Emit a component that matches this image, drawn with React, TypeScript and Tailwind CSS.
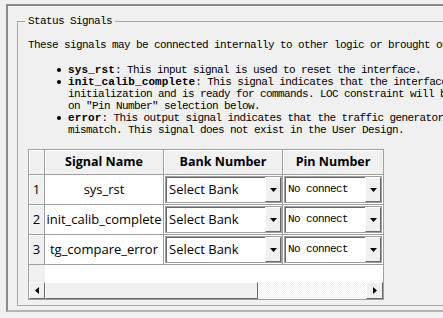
import React from 'react';

const mono = { fontFamily: '"Liberation Mono", "DejaVu Sans Mono", monospace' };
const sans = { fontFamily: '"Open Sans", "Noto Sans", sans-serif' };

const rows = ['sys_rst', 'init_calib_complete', 'tg_compare_error'];

function DownArrow() {
  return (
    <svg width="7" height="4" viewBox="0 0 7 4">
      <polygon points="0,0 7,0 3.5,4" fill="#000" />
    </svg>
  );
}

function Combo({ label, width, isMono }: { label: string; width: string; isMono?: boolean }) {
  return (
    <div className={`${width} h-[27px] flex border border-[#a0a0a0] bg-white shadow-[inset_1px_1px_0_#696969]`}>
      <div
        className={`flex-1 flex items-center pl-[3px] text-black whitespace-nowrap overflow-hidden ${isMono ? 'text-[11px] tracking-[-0.6px]' : 'text-[13px]'}`}
        style={isMono ? mono : sans}
      >
        {label}
      </div>
      <div className="w-[16px] h-[25px] bg-[#f0f0f0] border border-t-white border-l-white border-b-[#696969] border-r-[#696969] flex items-center justify-center">
        <DownArrow />
      </div>
    </div>
  );
}

function Bullet() {
  return (
    <span className="w-[11px] shrink-0 pt-[4px]">
      <span className="block w-[4px] h-[4px] rounded-full bg-black" />
    </span>
  );
}

export default function App() {
  return (
    <div className="w-[443px] h-[318px] bg-[#f0f0f0] overflow-hidden pt-[4px] pl-[6px] text-black">
      {/* outer panel */}
      <div className="w-[460px] h-[308px] border-2 border-[#8a8a8a] border-b-[#b4b4b4]">
        {/* group box */}
        <div className="relative ml-[9px] mt-[15px] w-[430px] border border-[#a8a8a8] pl-[10px] pt-[17px] pb-[5px]">
          <span
            className="absolute left-[7px] top-[-7px] px-[3px] bg-[#f0f0f0] text-[11px] leading-[12px] tracking-[-0.6px] whitespace-nowrap"
            style={mono}
          >
            Status Signals
          </span>

          <div className="text-[11px] leading-[12px] tracking-[-0.6px] whitespace-nowrap" style={mono}>
            <div>These signals may be connected internally to other logic or brought out to pins.</div>

            <div className="mt-[13px] ml-[29px]">
              <div className="flex">
                <Bullet />
                <div><b className="tracking-[0.1px]">sys_rst</b>: This input signal is used to reset the interface.</div>
              </div>
              <div className="flex">
                <Bullet />
                <div>
                  <div><b className="tracking-[0.1px]">init_calib_complete</b>: This signal indicates that the interface has completed</div>
                  <div>initialization and is ready for commands. LOC constraint will be applied based</div>
                  <div>on "Pin Number" selection below.</div>
                </div>
              </div>
              <div className="flex">
                <Bullet />
                <div>
                  <div><b className="tracking-[0.1px]">error</b>: This output signal indicates that the traffic generator detected a data</div>
                  <div>mismatch. This signal does not exist in the User Design.</div>
                </div>
              </div>
            </div>
          </div>

          {/* table */}
          <div className="mt-[13px] w-[356px] border border-[#a0a0a0] bg-white">
            {/* header */}
            <div className="flex h-[25px] bg-[#f0f0f0] font-bold text-[12.5px]" style={sans}>
              <div className="w-[16px] border-r border-b border-[#a0a0a0] shadow-[inset_1px_1px_0_#fff]" />
              <div className="w-[119px] flex items-center justify-center border-r border-b border-[#a0a0a0] shadow-[inset_1px_1px_0_#fff]">Signal Name</div>
              <div className="w-[119px] flex items-center justify-center border-r border-b border-[#a0a0a0] shadow-[inset_1px_1px_0_#fff]">Bank Number</div>
              <div className="w-[100px] flex items-center justify-center border-b border-[#a0a0a0] shadow-[inset_1px_1px_0_#fff]">Pin Number</div>
            </div>

            {rows.map((name, i) => (
              <div key={name} className="flex h-[30px]">
                <div className="w-[16px] bg-[#f0f0f0] flex items-center justify-center text-[13px] border-r border-b border-[#a0a0a0] shadow-[inset_1px_1px_0_#fff]" style={sans}>
                  {i + 1}
                </div>
                <div className="w-[119px] flex items-center justify-center text-[13px] border-r border-b border-[#a0a0a0]" style={sans}>
                  {name}
                </div>
                <div className="w-[119px] pl-[1px] pt-[1px] border-r border-b border-[#a0a0a0]">
                  <Combo label="Select Bank" width="w-[117px]" />
                </div>
                <div className="w-[100px] pl-[1px] pt-[1px] border-b border-[#a0a0a0]">
                  <Combo label="No connect" width="w-[98px]" isMono />
                </div>
              </div>
            ))}

            {/* empty space */}
            <div className="flex h-[17px]">
              <div className="w-[16px] bg-[#f0f0f0]" />
              <div className="flex-1 bg-white" />
            </div>

            {/* horizontal scrollbar */}
            <div className="flex h-[17px] bg-[#f0f0f0]">
              <div className="w-[16px] border border-t-white border-l-white border-b-[#696969] border-r-[#696969] flex items-center justify-center">
                <svg width="4" height="7" viewBox="0 0 4 7"><polygon points="4,0 4,7 0,3.5" fill="#000" /></svg>
              </div>
              <div className="w-[213px] border border-t-white border-l-white border-b-[#696969] border-r-[#696969]" />
              <div className="flex-1 bg-[repeating-conic-gradient(#f0f0f0_0%_25%,#ffffff_0%_50%)] bg-[length:2px_2px]" />
              <div className="w-[17px] border border-t-white border-l-white border-b-[#696969] border-r-[#696969] flex items-center justify-center">
                <svg width="4" height="7" viewBox="0 0 4 7"><polygon points="0,0 0,7 4,3.5" fill="#000" /></svg>
              </div>
            </div>
          </div>
        </div>
      </div>
    </div>
  );
}
